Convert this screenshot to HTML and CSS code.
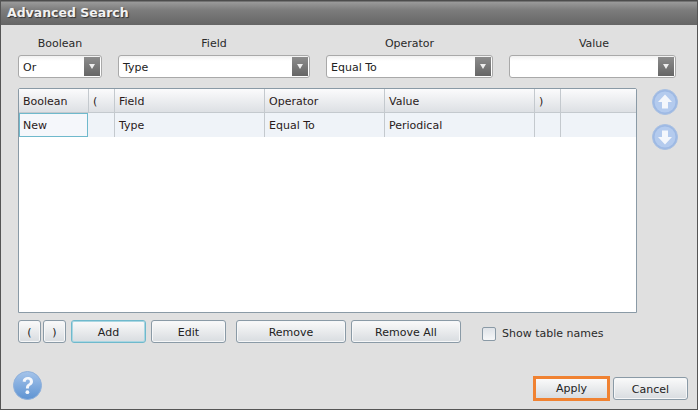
FILE: index.html
```html
<!DOCTYPE html>
<html>
<head>
<meta charset="utf-8">
<title>Advanced Search</title>
<link rel="stylesheet" href="styles.css">
</head>
<body>
<div class="dialog">
  <div class="titlebar">Advanced Search</div>
  <div class="content">
    <div class="filters">
      <div class="filter f-bool">
        <div class="flabel">Boolean</div>
        <div class="select"><span class="sval">Or</span><span class="arrow"></span></div>
      </div>
      <div class="filter f-field">
        <div class="flabel">Field</div>
        <div class="select"><span class="sval">Type</span><span class="arrow"></span></div>
      </div>
      <div class="filter f-op">
        <div class="flabel">Operator</div>
        <div class="select"><span class="sval">Equal To</span><span class="arrow"></span></div>
      </div>
      <div class="filter f-val">
        <div class="flabel">Value</div>
        <div class="select"><span class="sval"></span><span class="arrow"></span></div>
      </div>
    </div>
    <div class="middle">
      <div class="table">
        <div class="trow thead">
          <div class="cell c1">Boolean</div>
          <div class="cell c2">(</div>
          <div class="cell c3">Field</div>
          <div class="cell c4">Operator</div>
          <div class="cell c5">Value</div>
          <div class="cell c6">)</div>
          <div class="cell c7"></div>
        </div>
        <div class="trow tbody">
          <div class="cell c1 focus">New</div>
          <div class="cell c2"></div>
          <div class="cell c3">Type</div>
          <div class="cell c4">Equal To</div>
          <div class="cell c5">Periodical</div>
          <div class="cell c6"></div>
          <div class="cell c7"></div>
        </div>
      </div>
      <div class="movers">
        <svg class="mover" width="26" height="26" viewBox="0 0 26 26">
          <circle cx="13" cy="13" r="12.5" fill="#9db9e4" stroke="#a9c0e2"/>
          <circle cx="13" cy="13" r="10.5" fill="#b4cbee"/>
          <path d="M13 5.5 L20 13 H16 V19.5 H10 V13 H6 Z" fill="#f4f7fc"/>
        </svg>
        <svg class="mover" width="26" height="26" viewBox="0 0 26 26">
          <circle cx="13" cy="13" r="12.5" fill="#9db9e4" stroke="#a9c0e2"/>
          <circle cx="13" cy="13" r="10.5" fill="#b4cbee"/>
          <path d="M13 20.5 L20 13 H16 V6.5 H10 V13 H6 Z" fill="#f4f7fc"/>
        </svg>
      </div>
    </div>
    <div class="actions">
      <button class="btn b-paren">(</button>
      <button class="btn b-paren">)</button>
      <button class="btn b-add">Add</button>
      <button class="btn b-edit">Edit</button>
      <button class="btn b-remove">Remove</button>
      <button class="btn b-removeall">Remove All</button>
      <label class="check"><span class="box"></span><span>Show table names</span></label>
    </div>
    <div class="footer">
      <svg class="help" width="29" height="29" viewBox="0 0 29 29">
        <defs>
          <linearGradient id="hg" x1="0" y1="0" x2="0" y2="1">
            <stop offset="0" stop-color="#a5c4ea"/>
            <stop offset="1" stop-color="#5e93d2"/>
          </linearGradient>
        </defs>
        <circle cx="14.5" cy="14.5" r="14" fill="url(#hg)" stroke="#8fb0da"/>
        <path d="M9.6 10.6 C9.8 7.6 12 6 14.8 6 C17.8 6 20 7.8 20 10.4 C20 12.6 18.7 13.6 17.3 14.6 C16.2 15.4 15.9 16 15.9 17.6 H12.9 C12.9 15.3 13.5 14.2 15 13.1 C16.2 12.2 16.9 11.7 16.9 10.5 C16.9 9.3 16 8.5 14.8 8.5 C13.5 8.5 12.7 9.4 12.6 10.9 Z" fill="#f4f7fc"/>
        <circle cx="14.4" cy="21.2" r="1.9" fill="#f4f7fc"/>
      </svg>
      <div class="fbtns">
        <button class="btn b-apply">Apply</button>
        <button class="btn b-cancel">Cancel</button>
      </div>
    </div>
  </div>
</div>
</body>
</html>
```
FILE: styles.css
```css
* { box-sizing: border-box; }
html, body { margin: 0; padding: 0; }
body {
  width: 698px;
  height: 410px;
  overflow: hidden;
  font-family: "DejaVu Sans", sans-serif;
  font-size: 11px;
  color: #222;
}
.dialog {
  width: 698px;
  height: 410px;
  display: flex;
  flex-direction: column;
  background: #e0e0e0;
  border: 1px solid #555;
  border-top: 0;
}
.titlebar {
  height: 25px;
  flex: none;
  padding: 5px 0 0 6px;
  font-weight: bold;
  font-size: 12.5px;
  line-height: 16px;
  color: #f2f2f2;
  text-shadow: 1px 1px 1px #333;
  background: linear-gradient(#4c4c4c 0, #4c4c4c 1px, #9a9a9a 2px, #7c7c7c 10px, #666 25px);
}
.content {
  flex: 1;
  display: flex;
  flex-direction: column;
  padding: 11px 9px 8px 17px;
}
.filters { display: flex; gap: 16px; }
.filter { display: flex; flex-direction: column; }
.f-bool { width: 84px; }
.f-field { width: 192px; }
.f-op { width: 167px; }
.f-val { width: 167px; }
.flabel {
  height: 19px;
  line-height: 14px;
  text-align: center;
  color: #2a2a2a;
  padding-top: 1px;
}
.f-val .flabel { padding-left: 3px; }
.select {
  height: 23px;
  display: flex;
  align-items: center;
  justify-content: space-between;
  background: linear-gradient(#f1f1f1, #fff 5px);
  border: 1px solid #a9a9a9;
  border-radius: 3px;
  padding: 1px 1px 1px 4px;
  color: #222;
}
.sval { padding-top: 2px; }
.arrow {
  width: 16px;
  height: 19px;
  background: linear-gradient(#8c8c8c, #666);
  position: relative;
  flex: none;
}
.arrow::after {
  content: "";
  position: absolute;
  left: 5px;
  top: 7px;
  border-left: 3px solid transparent;
  border-right: 3px solid transparent;
  border-top: 5px solid #eee;
}
.middle { display: flex; margin-top: 10px; }
.table {
  width: 619px;
  height: 225px;
  background: #fff;
  border: 1px solid #8a9aa6;
  border-radius: 2px 2px 0 0;
}
.trow { display: flex; }
.thead {
  height: 24px;
  background: linear-gradient(#fbfbfc, #dde0e4);
  border-bottom: 1px solid #c4c9ce;
}
.tbody { height: 24px; background: #eff3f8; }
.cell {
  border-right: 1px solid #c4c9ce;
  padding: 1px 0 0 4px;
  line-height: 24px;
  color: #2a1a1a;
}
.c1 { width: 70px; }
.c2 { width: 26px; }
.c3 { width: 150px; }
.c4 { width: 120px; }
.c5 { width: 150px; }
.c6 { width: 26px; }
.c7 { flex: 1; border-right: 0; }
.focus {
  border: 1px solid #6fb9cc;
  background: #f5f7fb;
  padding: 1px 0 0 3px;
  line-height: 22px;
  width: 69px;
  margin-right: 1px;
}
.movers {
  display: flex;
  flex-direction: column;
  gap: 9px;
  margin: 1px 0 0 15px;
}
.mover { display: block; }
.actions { display: flex; align-items: flex-start; margin-top: 7px; }
.btn {
  height: 23px;
  font-family: inherit;
  font-size: 11px;
  color: #222;
  padding: 2px 0 0;
  border: 1px solid #8a9aa6;
  border-radius: 3px;
  background: linear-gradient(#fafafa, #d8dce0);
  box-shadow: inset 0 0 0 1px #f6f7f8;
}
.b-paren { width: 23px; margin-right: 2px; }
.b-add { width: 75px; margin-left: 3px; border-color: #6fb9cc; box-shadow: inset 0 0 0 1px #a9d6e2; }
.b-edit { width: 75px; margin-left: 5px; }
.b-remove { width: 110px; margin-left: 10px; }
.b-removeall { width: 110px; margin-left: 5px; }
.check {
  display: flex;
  align-items: center;
  gap: 6px;
  margin: 7px 0 0 21px;
  color: #2a2a2a;
  line-height: 14px;
}
.box {
  width: 14px;
  height: 14px;
  margin-top: -1px;
  border: 1px solid #8a9aa6;
  border-radius: 2px;
  background: linear-gradient(#dfe3e8, #f6f7f8);
}
.footer {
  margin-top: auto;
  display: flex;
  justify-content: space-between;
  align-items: flex-end;
}
.help { display: block; margin: 0 0 1px -5px; }
.fbtns { display: flex; align-items: flex-start; gap: 3px; }
.b-apply {
  width: 77px;
  height: 25px;
  padding: 0;
  border: 3px solid #f08232;
  border-radius: 0;
  box-shadow: none;
}
.b-cancel { width: 75px; margin-top: 1px; }
```
